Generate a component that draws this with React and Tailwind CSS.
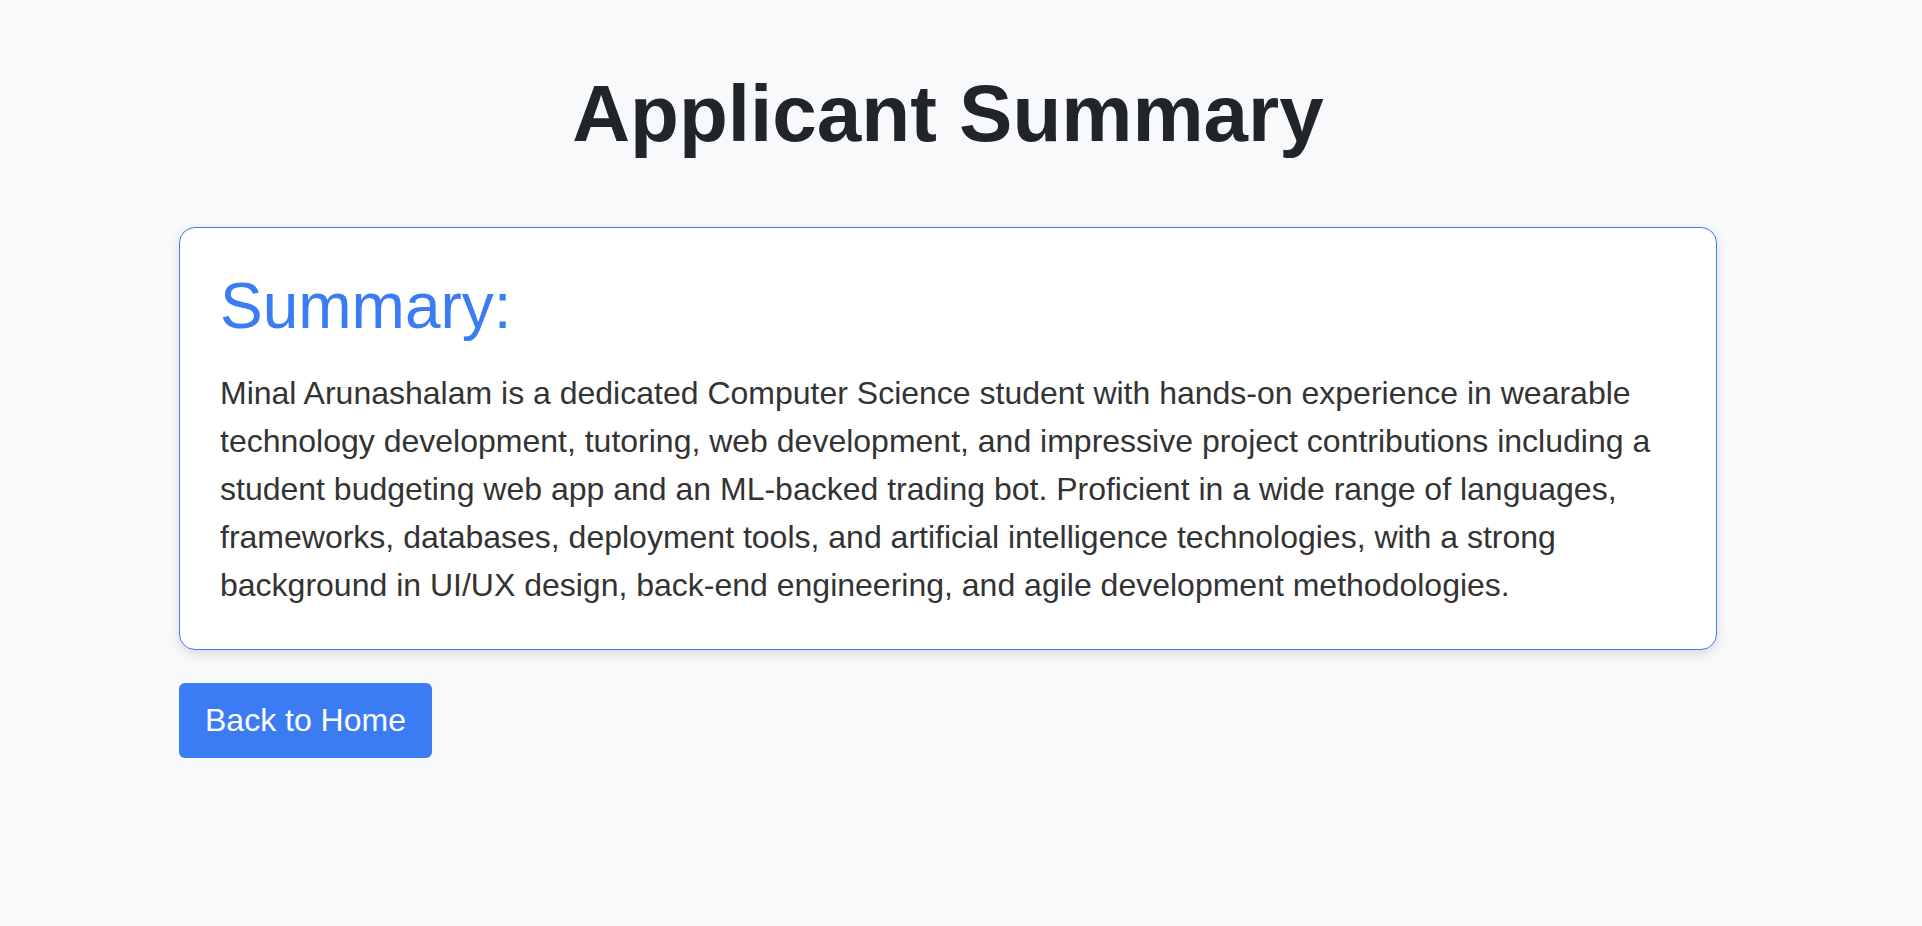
export default function App() {
  return (
    <div className="min-h-screen w-full bg-[#f8f9fa] font-['Liberation_Sans',Arial,sans-serif]">
      <div className="ml-[179px] w-[1538px] pt-[66px]">
        <h1 className="mb-[65px] text-center text-[80px] font-bold leading-[1.2] text-[#212529]">
          Applicant Summary
        </h1>
        <div className="rounded-2xl border border-[#3b7cf5] bg-white p-10 shadow-[0_4px_12px_rgba(0,0,0,0.12)]">
          <h2 className="mb-6 text-[64px] font-normal leading-[1.2] text-[#3b7cf5]">Summary:</h2>
          <p className="text-[32px] leading-[1.5] text-[#333333]">
            Minal Arunashalam is a dedicated Computer Science student with hands-on experience in wearable
            technology development, tutoring, web development, and impressive project contributions including a
            student budgeting web app and an ML-backed trading bot. Proficient in a wide range of languages,
            frameworks, databases, deployment tools, and artificial intelligence technologies, with a strong
            background in UI/UX design, back-end engineering, and agile development methodologies.
          </p>
        </div>
        <button className="mt-[33px] flex h-[75px] items-center rounded-[6px] bg-[#3b7cf5] px-[26px] text-[32px] leading-[1.5] text-white">
          Back to Home
        </button>
      </div>
    </div>
  );
}
